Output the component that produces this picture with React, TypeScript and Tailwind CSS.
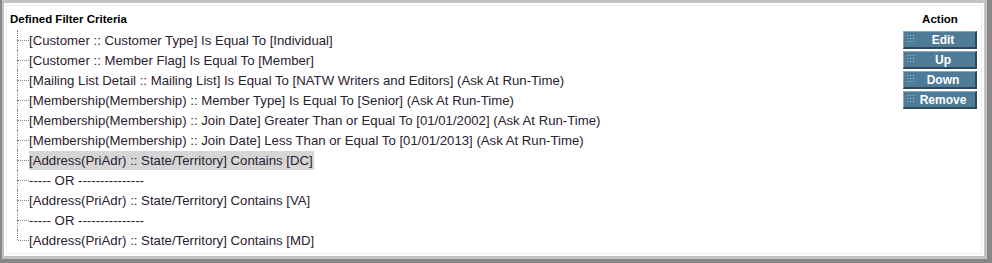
import React from "react";

const rows = [
  "[Customer :: Customer Type] Is Equal To [Individual]",
  "[Customer :: Member Flag] Is Equal To [Member]",
  "[Mailing List Detail :: Mailing List] Is Equal To [NATW Writers and Editors] (Ask At Run-Time)",
  "[Membership(Membership) :: Member Type] Is Equal To [Senior] (Ask At Run-Time)",
  "[Membership(Membership) :: Join Date] Greater Than or Equal To [01/01/2002] (Ask At Run-Time)",
  "[Membership(Membership) :: Join Date] Less Than or Equal To [01/01/2013] (Ask At Run-Time)",
  "[Address(PriAdr) :: State/Territory] Contains [DC]",
  "----- OR ---------------",
  "[Address(PriAdr) :: State/Territory] Contains [VA]",
  "----- OR ---------------",
  "[Address(PriAdr) :: State/Territory] Contains [MD]",
];

const actions = ["Edit", "Up", "Down", "Remove"];

const TreeRow: React.FC<{ text: string; last: boolean; selected: boolean }> = ({ text, last, selected }) => {
  return (
    <div className="flex h-[20px] items-stretch">
      <div className="flex w-[12px] flex-col">
        <div className="h-[10px] border-l border-dotted border-[#8a8a8a]" />
        <div className={last ? "flex-1" : "flex-1 border-l border-dotted border-[#8a8a8a]"} />
      </div>
      <div className="relative -ml-[12px] w-[12px]">
        <div className="absolute left-[1px] top-[10px] w-[11px] border-t border-dotted border-[#8a8a8a]" />
      </div>
      <div className="flex items-center">
        <span className={selected ? "bg-[#d6d6d6] pr-[1px] leading-[19px]" : "leading-[19px]"}>{text}</span>
      </div>
    </div>
  );
};

const ActionButton: React.FC<{ label: string }> = ({ label }) => {
  return (
    <button className="relative flex h-[18px] w-[74px] items-center justify-center border-t border-l border-[#88aac0] border-r-2 border-b-2 border-r-[#2c4a5c] border-b-[#2c4a5c] bg-[#4d7b98] text-[12px] font-bold leading-none text-white">
      <span className="absolute left-[3px] top-[3px] grid grid-cols-3 gap-[2px]">
        {Array.from({ length: 9 }).map((_, i) => (
          <span key={i} className="h-[1px] w-[1px] bg-[#a9c3d3]" />
        ))}
      </span>
      <span className="pl-[7px]">{label}</span>
    </button>
  );
};

export default function App() {
  return (
    <div className="h-[263px] w-[992px] bg-[#878787] pb-[4px] pl-[2px] pr-[5px]">
      <div className="h-full w-full bg-[#c2c2c2] pb-[3px] pl-[2px] pr-[3px] pt-[3px]">
        <div className="h-full w-full bg-white p-[2px]">
          <div
            className="flex h-full w-full border border-[#e7eeee] text-[#2a2030]"
            style={{ fontFamily: "'Liberation Sans', Arial, sans-serif" }}
          >
            <div className="flex-1 pl-[3px] pt-[6px]">
              <div className="h-[18px] text-[11.5px] font-bold leading-[14px] text-black">Defined Filter Criteria</div>
              <div className="ml-[7px] text-[13.2px]">
                {rows.map((r, i) => (
                  <TreeRow key={i} text={r} last={i === rows.length - 1} selected={i === 6} />
                ))}
              </div>
            </div>
            <div className="flex w-[74px] flex-col items-center pt-[6px] mr-[4px]">
              <div className="h-[19px] text-[11.5px] font-bold leading-[14px] text-black">Action</div>
              <div className="flex flex-col gap-[2px]">
                {actions.map((a) => (
                  <ActionButton key={a} label={a} />
                ))}
              </div>
            </div>
          </div>
        </div>
      </div>
    </div>
  );
}
